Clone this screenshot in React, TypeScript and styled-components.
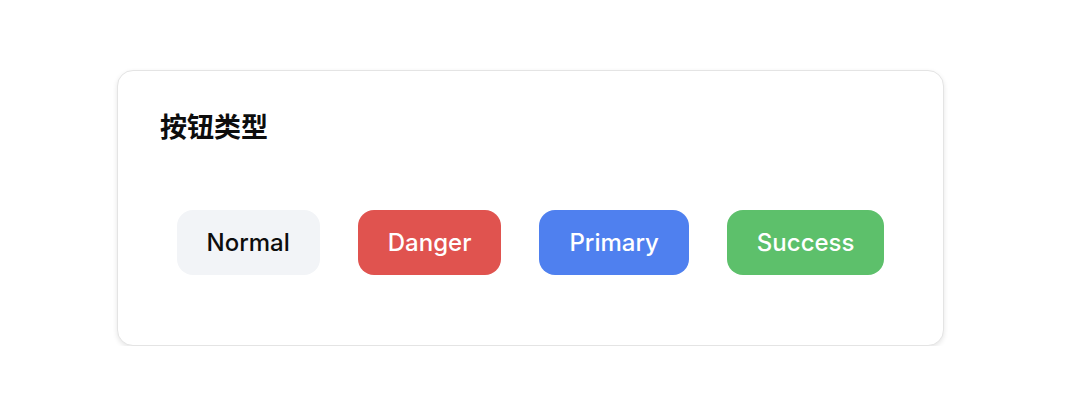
import React from "react";
import styled, {createGlobalStyle} from "styled-components";

const GlobalStyle = createGlobalStyle`
    html, body {
        margin: 0;
        background: #ffffff;
        font-family: Inter, "Noto Sans", "Noto Sans CJK SC", sans-serif;
    }
`

const Page = styled.div`
    padding: 70px 0 0 117px;
`

const Card = styled.section`
    width: 827px;
    height: 276px;
    box-sizing: border-box;
    border: 1px solid #e4e4e4;
    border-radius: 16px;
    box-shadow: 0 2px 5px rgba(0, 0, 0, 0.1);
    background: #ffffff;
    padding: 37px 42px 0 42px;
`

const Title = styled.h2`
    margin: 0;
    font-size: 27px;
    line-height: 36px;
    font-weight: 700;
    color: #0d0d0d;
    font-family: "Noto Sans CJK SC", sans-serif;
`

const Row = styled.div`
    display: flex;
    justify-content: center;
    gap: 38px;
    margin-top: 66px;
`

type Variant = "normal" | "danger" | "primary" | "success";

const palette: Record<Variant, {bg: string; fg: string}> = {
    normal: {bg: "#f2f4f7", fg: "#0d0d0d"},
    danger: {bg: "#e0534f", fg: "#ffffff"},
    primary: {bg: "#4f80ef", fg: "#ffffff"},
    success: {bg: "#5dc06b", fg: "#ffffff"},
};

const Button = styled.button<{$variant: Variant}>`
    height: 65px;
    padding: 0 30px;
    border: none;
    border-radius: 16px;
    font-family: Inter, "Noto Sans", sans-serif;
    font-size: 24px;
    font-weight: 500;
    background: ${p => palette[p.$variant].bg};
    color: ${p => palette[p.$variant].fg};
    cursor: pointer;
`

const buttons: {label: string; variant: Variant}[] = [
    {label: "Normal", variant: "normal"},
    {label: "Danger", variant: "danger"},
    {label: "Primary", variant: "primary"},
    {label: "Success", variant: "success"},
];

export default function App() {
    return (
        <>
            <GlobalStyle/>
            <Page>
                <Card>
                    <Title>按钮类型</Title>
                    <Row>
                        {buttons.map(b => (
                            <Button key={b.label} $variant={b.variant}>{b.label}</Button>
                        ))}
                    </Row>
                </Card>
            </Page>
        </>
    )
}
